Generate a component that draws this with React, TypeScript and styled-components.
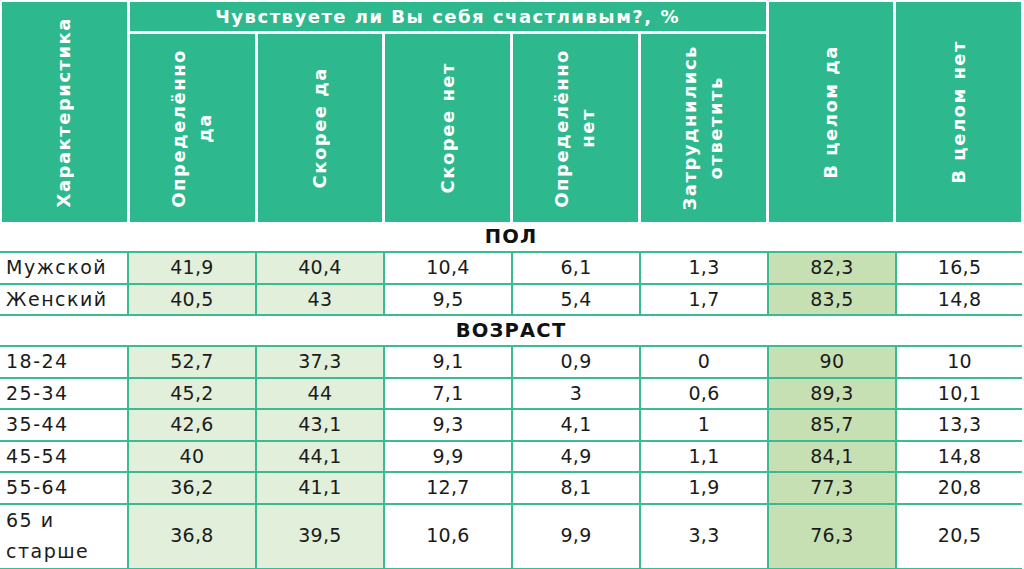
import React from "react";
import styled, { createGlobalStyle } from "styled-components";

const TEAL = "#2DB98D";
const LINE = "#3BBB93";
const LIGHT = "#E2EFDA";
const MID = "#C6E0B4";
const FONT = `"DejaVu Sans", "Noto Sans", sans-serif`;

const Global = createGlobalStyle`
  html, body { margin: 0; padding: 0; background: #fff; }
  body { font-family: ${FONT}; color: #1b1b1b; }
`;

const Page = styled.div`
  width: 1024px;
  height: 569px;
  overflow: hidden;
  background: #fff;
`;

const Header = styled.div`
  display: grid;
  grid-template-columns: repeat(8, 124.75px);
  grid-template-rows: 29px 188px;
  column-gap: 3px;
  row-gap: 3px;
  padding: 2px 3px 0 2px;
  width: 1024px;
  box-sizing: border-box;
`;

const HeadCell = styled.div<{ $col: string; $row: string }>`
  grid-column: ${(p) => p.$col};
  grid-row: ${(p) => p.$row};
  background: ${TEAL};
  color: #fff;
  font-weight: 700;
  display: flex;
  align-items: center;
  justify-content: center;
`;

const Title = styled.span`
  font-size: 18px;
  letter-spacing: 1.5px;
  white-space: nowrap;
`;

const Rotated = styled.span`
  writing-mode: vertical-rl;
  transform: rotate(180deg);
  font-size: 18px;
  line-height: 26px;
  text-align: center;
  letter-spacing: 1.5px;
  white-space: nowrap;
`;

const Table = styled.table`
  border-collapse: collapse;
  table-layout: fixed;
  width: 1022px;
  font-size: 19px;
  letter-spacing: 0.3px;
`;

const Section = styled.td`
  height: 29px;
  padding: 0;
  border: none;
  text-align: center;
  font-weight: 700;
  font-size: 19.5px;
  letter-spacing: 1.2px;
  color: #111;
  line-height: 29px;
`;

const Cell = styled.td<{ $tone?: "light" | "mid" }>`
  height: 27.5px;
  padding: 0;
  border: 2px solid ${LINE};
  text-align: center;
  vertical-align: middle;
  line-height: 27.5px;
  background: ${(p) =>
    p.$tone === "light" ? LIGHT : p.$tone === "mid" ? MID : "#fff"};
  &:last-child { border-right: none; }
`;

const Label = styled(Cell)<{ $tall?: boolean }>`
  text-align: left;
  padding-left: 6px;
  border-left: none;
  line-height: ${(p) => (p.$tall ? "31.5px" : "29.5px")};
  letter-spacing: 1.5px;
`;

type Row = { label: React.ReactNode; values: string[]; tall?: boolean };

const sex: Row[] = [
  { label: "Мужской", values: ["41,9", "40,4", "10,4", "6,1", "1,3", "82,3", "16,5"] },
  { label: "Женский", values: ["40,5", "43", "9,5", "5,4", "1,7", "83,5", "14,8"] },
];

const age: Row[] = [
  { label: "18-24", values: ["52,7", "37,3", "9,1", "0,9", "0", "90", "10"] },
  { label: "25-34", values: ["45,2", "44", "7,1", "3", "0,6", "89,3", "10,1"] },
  { label: "35-44", values: ["42,6", "43,1", "9,3", "4,1", "1", "85,7", "13,3"] },
  { label: "45-54", values: ["40", "44,1", "9,9", "4,9", "1,1", "84,1", "14,8"] },
  { label: "55-64", values: ["36,2", "41,1", "12,7", "8,1", "1,9", "77,3", "20,8"] },
  {
    label: (
      <>
        65 и
        <br />
        старше
      </>
    ),
    values: ["36,8", "39,5", "10,6", "9,9", "3,3", "76,3", "20,5"],
    tall: true,
  },
];

const tone = (i: number): "light" | "mid" | undefined =>
  i < 2 ? "light" : i === 5 ? "mid" : undefined;

const DataRows = ({ rows }: { rows: Row[] }) => (
  <>
    {rows.map((r, ri) => (
      <tr key={ri}>
        <Label $tall={r.tall}>{r.label}</Label>
        {r.values.map((v, i) => (
          <Cell key={i} $tone={tone(i)}>
            {v}
          </Cell>
        ))}
      </tr>
    ))}
  </>
);

const subHeads: React.ReactNode[] = [
  <>Определённо<br />да</>,
  <>Скорее да</>,
  <>Скорее нет</>,
  <>Определённо<br />нет</>,
  <>Затруднились<br />ответить</>,
];

export default function App() {
  return (
    <Page>
      <Global />
      <Header>
        <HeadCell $col="1" $row="1 / 3">
          <Rotated>Характеристика</Rotated>
        </HeadCell>
        <HeadCell $col="2 / 7" $row="1">
          <Title>Чувствуете ли Вы себя счастливым?, %</Title>
        </HeadCell>
        {subHeads.map((h, i) => (
          <HeadCell key={i} $col={String(i + 2)} $row="2">
            <Rotated>{h}</Rotated>
          </HeadCell>
        ))}
        <HeadCell $col="7" $row="1 / 3">
          <Rotated>В целом да</Rotated>
        </HeadCell>
        <HeadCell $col="8" $row="1 / 3">
          <Rotated>В целом нет</Rotated>
        </HeadCell>
      </Header>
      <Table>
        <colgroup>
          {[128, 128, 128, 128, 128, 128, 128, 126].map((w, i) => (
            <col key={i} style={{ width: w }} />
          ))}
        </colgroup>
        <tbody>
          <tr>
            <Section colSpan={8}>ПОЛ</Section>
          </tr>
          <DataRows rows={sex} />
          <tr>
            <Section colSpan={8}>ВОЗРАСТ</Section>
          </tr>
          <DataRows rows={age} />
        </tbody>
      </Table>
    </Page>
  );
}
